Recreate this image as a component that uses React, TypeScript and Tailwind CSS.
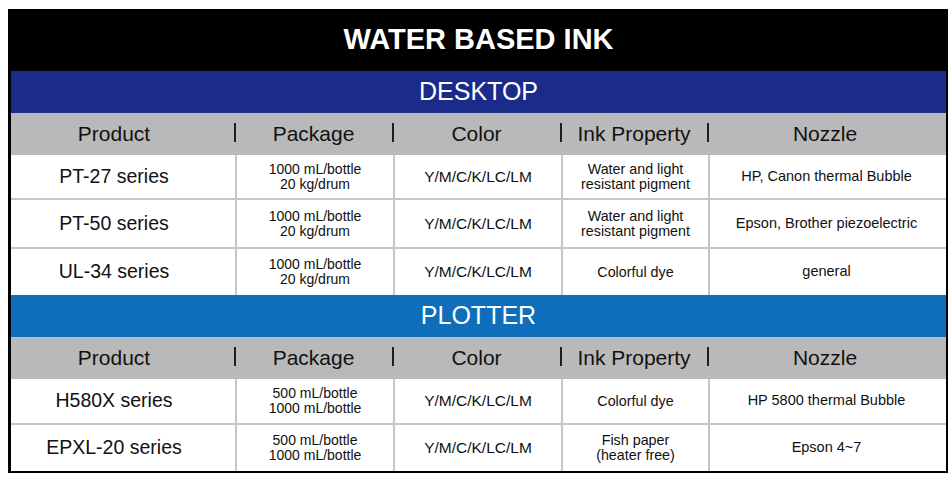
const cols = 'grid grid-cols-[224px_158px_168px_147px_235px]';

type Row = {
  product: string;
  pkg: string[];
  color: string;
  ink: string[];
  nozzle: string;
  h: string;
};

const desktop: Row[] = [
  { product: 'PT-27 series', pkg: ['1000 mL/bottle', '20 kg/drum'], color: 'Y/M/C/K/LC/LM', ink: ['Water and light', 'resistant pigment'], nozzle: 'HP, Canon thermal Bubble', h: 'h-[43px]' },
  { product: 'PT-50 series', pkg: ['1000 mL/bottle', '20 kg/drum'], color: 'Y/M/C/K/LC/LM', ink: ['Water and light', 'resistant pigment'], nozzle: 'Epson, Brother piezoelectric', h: 'h-[49px]' },
  { product: 'UL-34 series', pkg: ['1000 mL/bottle', '20 kg/drum'], color: 'Y/M/C/K/LC/LM', ink: ['Colorful dye'], nozzle: 'general', h: 'h-[48px]' },
];

const plotter: Row[] = [
  { product: 'H580X series', pkg: ['500 mL/bottle', '1000 mL/bottle'], color: 'Y/M/C/K/LC/LM', ink: ['Colorful dye'], nozzle: 'HP 5800 thermal Bubble', h: 'h-[44px]' },
  { product: 'EPXL-20 series', pkg: ['500 mL/bottle', '1000 mL/bottle'], color: 'Y/M/C/K/LC/LM', ink: ['Fish paper', '(heater free)'], nozzle: 'Epson 4~7', h: 'h-[48px]' },
];

function HeaderRow() {
  const titles = ['Product', 'Package', 'Color', 'Ink Property', 'Nozzle'];
  return (
    <div className={`${cols} h-[42px] bg-[#b9b9b9] text-[21px] text-[#111]`}>
      {titles.map((t, i) => (
        <div key={t} className="flex items-center">
          {i > 0 && <div className="-ml-[1px] mb-[3px] h-[19px] w-[2px] shrink-0 bg-[#1e1e1e]" />}
          <span className={`flex-1 text-center ${i === 0 ? 'pr-[18px]' : 'pr-[2px]'}`}>{t}</span>
        </div>
      ))}
    </div>
  );
}

function Lines({ lines }: { lines: string[] }) {
  return (
    <div className="leading-[15px]">
      {lines.map((l) => (
        <div key={l}>{l}</div>
      ))}
    </div>
  );
}

function BodyRow({ r, first }: { r: Row; first: boolean }) {
  const cell = 'flex items-center justify-center text-center border-l-2 border-[#c6c6c6]';
  return (
    <div className={`${cols} ${r.h} bg-white text-[#111] ${first ? '' : 'border-t-2 border-[#c6c6c6]'}`}>
      <div className="flex items-center justify-center pr-[18px] text-[19.5px]">{r.product}</div>
      <div className={`${cell} text-[14px]`}>
        <Lines lines={r.pkg} />
      </div>
      <div className={`${cell} text-[15.5px]`}>{r.color}</div>
      <div className={`${cell} text-[14.3px]`}>
        <Lines lines={r.ink} />
      </div>
      <div className={`${cell} text-[14.5px]`}>{r.nozzle}</div>
    </div>
  );
}

function Section({ title, band, rows }: { title: string; band: string; rows: Row[] }) {
  return (
    <>
      <div className={`h-[42px] flex items-center justify-center text-[25px] text-white ${band}`}>{title}</div>
      <HeaderRow />
      {rows.map((r, i) => (
        <BodyRow key={r.product} r={r} first={i === 0} />
      ))}
    </>
  );
}

export default function App() {
  return (
    <div className="w-[951px] h-[481px] bg-white pt-[9px] pl-[8px] font-['Liberation_Sans',Arial,sans-serif]">
      <div className="w-[940px] border-l-[3px] border-r-2 border-b-2 border-black">
        <div className="h-[62px] bg-black flex items-center justify-center text-[29px] font-bold text-white">
          WATER BASED INK
        </div>
        <Section title="DESKTOP" band="bg-[#1a2b8a]" rows={desktop} />
        <Section title="PLOTTER" band="bg-[#0e6ebc]" rows={plotter} />
      </div>
    </div>
  );
}
